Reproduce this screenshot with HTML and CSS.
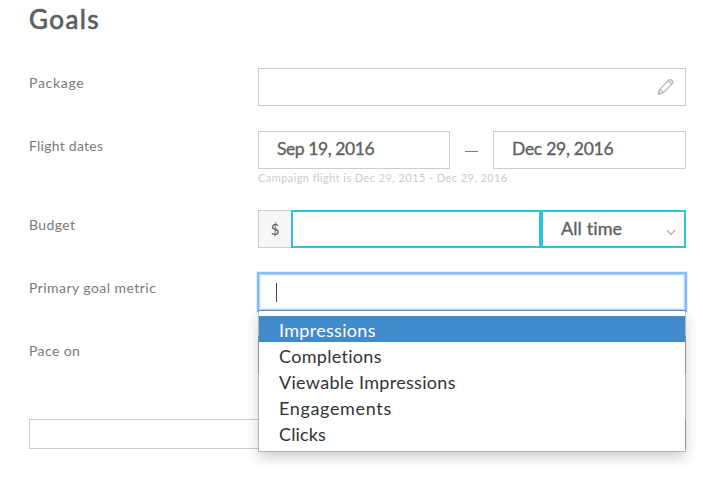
FILE: index.html
```html
<!DOCTYPE html>
<html lang="en">
<head>
<meta charset="utf-8">
<title>Goals</title>
<link rel="stylesheet" href="styles.css">
</head>
<body>
<form class="goals">
  <h1 class="title">Goals</h1>
  <div class="row">
    <div class="label package-label">Package</div>
    <div class="control box package">
      <svg class="pencil" width="18" height="18" viewBox="0 0 18 18"><path d="M1.5 16 2.6 11.4 11.7 2.3Q13.4 .9 15 2.5T15.2 5.8L6.1 14.9ZM2.6 11.4Q5.2 12 6.1 14.9M10.9 3.1Q13.8 3.7 14.4 6.6"/><path d="M1.5 16 2 14 3.5 15.5Z"/></svg>
    </div>
  </div>
  <div class="row dates-row">
    <div class="label dates-label">Flight dates</div>
    <div class="control">
      <div class="dates">
        <div class="box date start">Sep 19, 2016</div>
        <span class="dash"></span>
        <div class="box date end">Dec 29, 2016</div>
      </div>
      <div class="hint">Campaign flight is Dec 29, 2015 - Dec 29, 2016</div>
    </div>
  </div>
  <div class="row">
    <div class="label">Budget</div>
    <div class="control budget">
      <div class="currency">$</div>
      <div class="amount"></div>
      <div class="period"><span class="period-text">All time</span>
        <svg class="chevron" width="10" height="7" viewBox="0 0 10 7"><path d="M1 1 5 5.5 9 1"/></svg>
      </div>
    </div>
  </div>
  <div class="row">
    <div class="label metric-label">Primary goal metric</div>
    <div class="control box metric">
      <span class="caret"></span>
      <ul class="menu">
        <li class="active">Impressions</li>
        <li>Completions</li>
        <li>Viewable Impressions</li>
        <li class="engagements">Engagements</li>
        <li class="clicks">Clicks</li>
      </ul>
    </div>
  </div>
  <div class="row">
    <div class="label">Pace on</div>
    <div class="control box"></div>
  </div>
  <div class="box footer-box"></div>
</form>
</body>
</html>
```
FILE: styles.css
```css
* { box-sizing: border-box; }
body { margin: 0; min-height: 480px; background: #fff; color: #5e5f5f; font-family: Lato, "Liberation Sans", sans-serif; font-variant-ligatures: none; }
.goals { width: 657px; min-height: 480px; margin-left: 29px; }
.title { margin: 0; height: 68px; padding-top: 3px; font-size: 26px; line-height: 32px; font-weight: 400; letter-spacing: 1.4px; -webkit-text-stroke: .7px; }
.row { display: flex; height: 38px; margin-bottom: 25px; }
.dates-row { height: 54px; }
.label { width: 229px; padding-top: 5px; font-size: 14px; line-height: 20px; color: #7b7b7b; letter-spacing: .4px; }
.package-label { letter-spacing: .7px; }
.dates-label { letter-spacing: .25px; }
.metric-label { letter-spacing: .45px; }
.control { width: 428px; }
.box { border: 1px solid #ccc; background: #fff; }
.package { display: flex; justify-content: flex-end; padding: 9px 10px 0 0; }
.pencil { fill: none; stroke: #b8b8b8; stroke-width: 1.3; stroke-linejoin: round; }
.dates { display: flex; align-items: center; justify-content: space-between; }
.date { height: 38px; padding-left: 18px; font-size: 17.5px; line-height: 34px; letter-spacing: -.42px; -webkit-text-stroke: .35px; }
.start { width: 192px; }
.end { width: 193px; letter-spacing: -.28px; }
.dash { width: 13px; height: 1px; background: #7c7c7c; margin-top: 3px; }
.hint { margin-top: 1px; font-size: 11px; line-height: 16px; color: #ccc; letter-spacing: .43px; }
.budget { display: flex; }
.currency { width: 33px; border: 1px solid #ccc; border-right: 0; background: #f7f7f7; text-align: center; font-size: 15px; line-height: 36px; }
.amount { width: 250px; border: 2px solid #2bc4df; }
.period { width: 145px; border: 2px solid #2bc4df; padding: 0 8px 2px 18px; display: flex; justify-content: space-between; align-items: center; font-size: 18px; line-height: 32px; letter-spacing: .1px; }
.period-text { -webkit-text-stroke: .35px; }
.chevron { fill: none; stroke: #b5b5b5; stroke-width: 1.4; margin-top: 8px; }
.metric { position: relative; border-color: #7bb8fb; box-shadow: 0 0 0 1px #7bb8fbd0, 0 0 0 2px #7bb8fb40, inset 0 0 0 1px #7bb8fb70, inset 0 0 0 2px #7bb8fb30; }
.caret { display: block; width: 1px; height: 19px; margin: 9px 0 0 17px; background: #444; }
.menu { position: absolute; z-index: 1; top: 36px; left: -1px; width: 428px; margin: 0; padding: 5px 0; list-style: none; background: #fff; background-clip: padding-box; border: 1px solid rgba(0,0,0,.2); box-shadow: 0 6px 12px rgba(0,0,0,.175); font-size: 18px; line-height: 26px; color: #333; }
.menu li { height: 26px; padding: 1px 20px 0; letter-spacing: .3px; }
.menu .engagements { letter-spacing: .65px; }
.menu .clicks { letter-spacing: .15px; }
.menu .active { background: #428bca; color: #fff; }
.footer-box { margin-top: 45px; height: 30px; }
```
